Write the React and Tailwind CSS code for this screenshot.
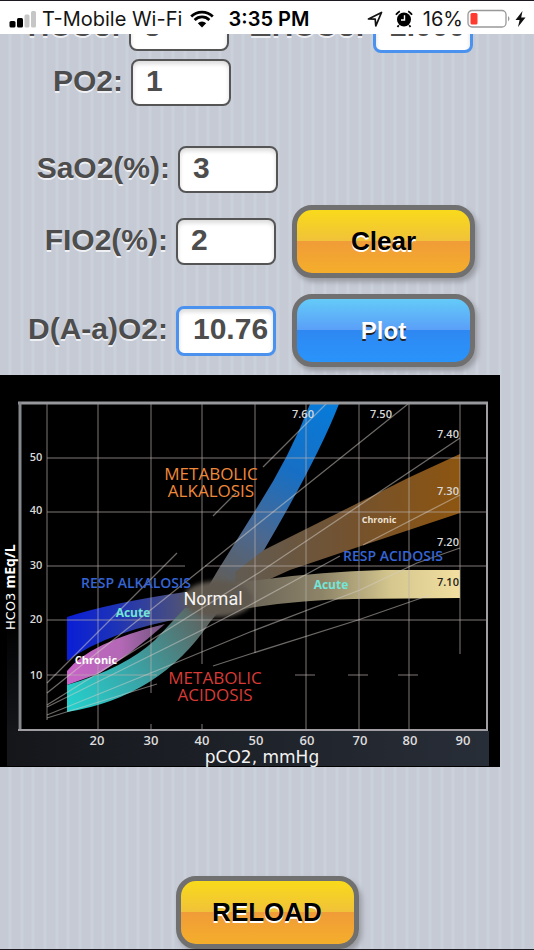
import React from "react";

const stripes =
  "bg-[#c5cad5] bg-[repeating-linear-gradient(90deg,#c5cad5_0px,#c5cad5_8px,#cbd1db_9px,#cbd1db_11px,#c5cad5_12px,#c5cad5_20px,#cbd1db_21px,#cbd1db_23px,#c5cad5_24px,#c5cad5_31px,#cbd1db_32px,#cbd1db_34px,#c5cad5_35px)]";

const pageFont = "font-['Liberation_Sans',Arial,sans-serif]";

function StatusBar() {
  return (
    <header className="z-10 grid h-[34px] shrink-0 grid-cols-[1fr_auto_1fr] items-center border-t border-[#1c1920] bg-white px-2 pt-0.5 font-['Inter',sans-serif] text-xl leading-6 text-[#151515]">
      <div className="flex items-center whitespace-nowrap">
        <svg width="28" height="18" viewBox="0 0 28 18" className="mr-1.5 shrink-0" aria-label="Signal">
          <rect x="1.5" y="11" width="6" height="6.5" rx="1.5" fill="#000" />
          <rect x="9" y="8" width="6" height="9.5" rx="1.5" fill="#000" />
          <rect x="16.5" y="4.5" width="5" height="13" rx="1.5" fill="#c6c6c6" />
          <rect x="23" y="1" width="5" height="16.5" rx="1.5" fill="#c6c6c6" />
        </svg>
        <span>T-Mobile Wi-Fi</span>
        <svg width="24" height="18" viewBox="0 0 24 18" className="ml-2 shrink-0" aria-label="Wi-Fi">
          <path d="M12 17.500 L7.800 13.300 A6 6 0 0 1 16.200 13.300 Z" fill="#000" />
          <path d="M4.600 10 A10.500 10.500 0 0 1 19.400 10" fill="none" stroke="#000" strokeWidth="2.700" />
          <path d="M1.200 6.500 A15.300 15.300 0 0 1 22.800 6.500" fill="none" stroke="#000" strokeWidth="2.700" />
        </svg>
      </div>
      <span className="ml-1 font-semibold text-black">3:35 PM</span>
      <div className="flex items-center justify-end whitespace-nowrap">
        <svg width="16" height="16" viewBox="0 0 16 16" className="mr-3 shrink-0" aria-label="Location">
          <path d="M1.500 8 L14.500 1.500 L8.800 14.800 L8.200 8.200 Z" fill="none" stroke="#111" strokeWidth="1.700" strokeLinejoin="round" />
        </svg>
        <svg width="18" height="18" viewBox="0 0 18 18" className="mr-2 shrink-0" aria-label="Alarm">
          <circle cx="9" cy="9.500" r="7" fill="#000" />
          <path d="M1 4.800 A10 10 0 0 1 4.800 1.200 M17 4.800 A10 10 0 0 0 13.200 1.200" stroke="#000" strokeWidth="1.800" fill="none" />
          <path d="M3.800 15.300 L2.500 17 M14.200 15.300 L15.500 17" stroke="#000" strokeWidth="1.800" />
          <path d="M9.500 5.200 V10 H6" fill="none" stroke="#fff" strokeWidth="1.400" />
        </svg>
        <span className="ml-0.5">16%</span>
        <svg width="44" height="20" viewBox="0 0 44 20" className="ml-1 shrink-0" aria-label="Battery">
          <rect x="1" y="1.500" width="38" height="16.500" rx="4" fill="none" stroke="#999" strokeWidth="1.300" />
          <rect x="3.500" y="4" width="7" height="11.500" rx="1.500" fill="#ff3b30" />
          <path d="M41 7 Q44 9.700 41 12.400 Z" fill="#999" />
        </svg>
        <svg width="11" height="16" viewBox="0 0 11 16" className="ml-1 shrink-0" aria-label="Charging">
          <path d="M7.500 0 L0.500 9 H4.600 L3 16 L10.500 6.500 H6.200 Z" fill="#111" />
        </svg>
      </div>
    </header>
  );
}

function Field({ id, label, value, result = false, labelClass }) {
  return (
    <div className="flex items-center gap-2">
      <label
        htmlFor={id}
        className={`shrink-0 whitespace-nowrap pb-1 text-right text-[30px] font-bold leading-[42px] text-[#4d4d4d] [text-shadow:0_2px_0_#eef0f4] ${labelClass}`}
      >
        {label}
      </label>
      <input
        id={id}
        defaultValue={value}
        className={`w-[100px] shrink-0 rounded-lg bg-white pb-1 text-[30px] font-bold leading-8 text-[#4d4d4d] shadow-[inset_0_3px_4px_#dcdcdc] outline-none ${
          result ? "h-[50px] border-[3px] border-[#4a92ee] pl-3.5" : "h-[47px] border-2 border-[#555] pl-[13px]"
        }`}
      />
    </div>
  );
}

const buttonColors = {
  gold: "bg-[linear-gradient(#f9da1b_0%,#f0c239_49%,#f09c38_50%,#f5ae2b_100%)] text-black [text-shadow:0_2px_0_#fff]",
  blue: "bg-[linear-gradient(#64cbf8_0%,#5a9ff8_49%,#2f88f2_50%,#2994fb_100%)] text-white [text-shadow:0_2px_0_#222]",
};

function GlossButton({ color, size = "text-[26px]", children }) {
  return (
    <button
      type="button"
      className={`h-[73px] w-[183px] shrink-0 rounded-[20px] border-[5px] border-[#707070] font-bold shadow-[3px_4px_5px_#9a9ca3] ${size} ${buttonColors[color]}`}
    >
      {children}
    </button>
  );
}

const columns = [
  [47, 720],
  [98, 730],
  [151, 693],
  [202, 664],
  [255, 653],
  [306, 730],
  [359, 730],
  [409, 730],
  [460, 654],
];

function Chart() {
  return (
    <svg viewBox="0 375 500 392" className="block h-auto w-[500px] max-w-full" role="img" aria-label="Acid-base nomogram">
      <defs>
        <linearGradient id="alk" gradientUnits="userSpaceOnUse" x1="320" y1="404" x2="225" y2="590">
          <stop offset="0" stopColor="#087ad8" />
          <stop offset="0.35" stopColor="#176fc4" />
          <stop offset="0.7" stopColor="#4c688f" />
          <stop offset="1" stopColor="#625d55" />
        </linearGradient>
        <linearGradient id="brown" gradientUnits="userSpaceOnUse" x1="240" y1="0" x2="460" y2="0">
          <stop offset="0" stopColor="#625b51" />
          <stop offset="0.5" stopColor="#73522f" />
          <stop offset="1" stopColor="#8d5510" />
        </linearGradient>
        <linearGradient id="cream" gradientUnits="userSpaceOnUse" x1="230" y1="0" x2="460" y2="0">
          <stop offset="0" stopColor="#625c53" />
          <stop offset="0.4" stopColor="#8d8468" />
          <stop offset="0.7" stopColor="#d5c78e" />
          <stop offset="1" stopColor="#f2dfa0" />
        </linearGradient>
        <linearGradient id="navy" gradientUnits="userSpaceOnUse" x1="67" y1="0" x2="200" y2="0">
          <stop offset="0" stopColor="#0a1ed6" />
          <stop offset="0.35" stopColor="#1c32b8" />
          <stop offset="1" stopColor="#5b5a68" />
        </linearGradient>
        <linearGradient id="pink" gradientUnits="userSpaceOnUse" x1="67" y1="0" x2="175" y2="0">
          <stop offset="0" stopColor="#c864c8" />
          <stop offset="0.5" stopColor="#b368b5" />
          <stop offset="1" stopColor="#5f5070" />
        </linearGradient>
        <linearGradient id="teal" gradientUnits="userSpaceOnUse" x1="67" y1="700" x2="205" y2="610">
          <stop offset="0" stopColor="#24cfcb" />
          <stop offset="0.4" stopColor="#38a8ab" />
          <stop offset="1" stopColor="#5f605c" />
        </linearGradient>
        <linearGradient id="footer" x1="0" y1="0" x2="1" y2="0">
          <stop offset="0" stopColor="#14161a" />
          <stop offset="1" stopColor="#282e38" />
        </linearGradient>
        <linearGradient id="side" x1="0" y1="0" x2="0" y2="1">
          <stop offset="0" stopColor="#000" />
          <stop offset="1" stopColor="#14161a" />
        </linearGradient>
        <filter id="soft" x="-20%" y="-20%" width="140%" height="140%">
          <feGaussianBlur stdDeviation="2" />
        </filter>
      </defs>

      <rect x="0" y="375" width="500" height="392" fill="#000" />
      <rect x="7" y="620" width="11" height="112" fill="url(#side)" />
      <rect x="7" y="731" width="482" height="35" fill="url(#footer)" />

      <path d="M310 404 H339 Q318 458 264 550 L246 585 L205 592 L218 570 L258 506 Q290 456 310 404 Z" fill="url(#alk)" />
      <path d="M460 454 L410 477 L358 503 L264 550 L235 572 L235 595 L290 570 L370 543 L460 513 Z" fill="url(#brown)" />
      <path d="M460 570 H383 Q320 572 267 579 L225 584 V612 Q290 600 353 599 L460 598 Z" fill="url(#cream)" />
      <path d="M67 617 Q110 603 185 592 L205 600 L190 617 Q110 630 67 661 Z" fill="url(#navy)" />
      <path d="M67 671 Q90 642 165 624 Q130 655 100 673 L67 685 Z" fill="url(#pink)" />
      <path d="M67 685 Q125 668 155 640 L185 608 L225 604 L210 622 Q160 697 67 712 Z" fill="url(#teal)" />
      <ellipse cx="218" cy="599" rx="35" ry="18" fill="#5e5850" filter="url(#soft)" />

      <g stroke="#b8b0ac" strokeOpacity="0.34" strokeWidth="2">
        {columns.map(([x, end]) => (
          <path key={x} d={`M${x} 404 V${end}`} />
        ))}
        <path d="M47 458 H487 M47 512 H487 M47 566 H185 M205 566 H487 M47 620 H487 M47 675 H157 M295 675 H315 M348 675 H368 M398 675 H418" />
        <path d="M151 724 V730 M202 724 V730" />
      </g>
      <g stroke="#d6cfc9" strokeOpacity="0.5" strokeWidth="1.300" fill="none">
        <path d="M47 683 L177 553 M213 516 L236 493 M263 467 L327 403" />
        <path d="M47 693 L213 560 L408 404" />
        <path d="M47 705 L260 572 L460 438" />
        <path d="M47 707 L202 630 L250 605 L340 556 M363 545 L460 495" />
        <path d="M47 715 L163 668 L250 632 L360 590 L417 563 L460 548" />
        <path d="M47 718 L157 684 M213 666 L250 654 L358 620 L430 595" />
      </g>

      <path d="M18 403 H488" stroke="#96989b" strokeWidth="3" />
      <path d="M20 402 V731" stroke="#85888c" strokeWidth="3" />
      <path d="M487 402 V731 M18 730 H488" stroke="#a09da3" strokeWidth="2" />

      <g fontFamily="'Open Sans','Noto Sans',sans-serif" textAnchor="middle">
        <g fontSize="17" fontWeight="500">
          <text x="211" y="480" fill="#f0883a">METABOLIC</text>
          <text x="211" y="497" fill="#f0883a">ALKALOSIS</text>
          <text x="215" y="684" fill="#d83a35">METABOLIC</text>
          <text x="215" y="701" fill="#d83a35">ACIDOSIS</text>
        </g>
        <g fontSize="14" fontWeight="600" fill="#3564d4">
          <text x="136" y="588">RESP ALKALOSIS</text>
          <text x="393" y="561">RESP ACIDOSIS</text>
        </g>
        <g fontSize="12" fontWeight="700" fill="#72e6d8">
          <text x="133" y="617">Acute</text>
          <text x="331" y="589">Acute</text>
        </g>
        <text x="96" y="664" fontSize="11" fontWeight="700" fill="#fff">Chronic</text>
        <text x="379" y="523" fontSize="9" fontWeight="700" fill="#eee3d5">Chronic</text>
        <g fontSize="11" fontWeight="600" fill="#d9d9d9">
          <text x="36" y="461">50</text>
          <text x="36" y="514">40</text>
          <text x="36" y="569">30</text>
          <text x="36" y="623">20</text>
          <text x="36" y="679">10</text>
          <text x="303" y="418">7.60</text>
          <text x="381" y="418">7.50</text>
          <text x="448" y="438">7.40</text>
          <text x="448" y="495">7.30</text>
          <text x="448" y="546">7.20</text>
          <text x="448" y="586" fill="#26221a">7.10</text>
        </g>
        <g fontSize="13" fontWeight="600" fill="#dcdcdc">
          <text x="97" y="745">20</text>
          <text x="151" y="745">30</text>
          <text x="202" y="745">40</text>
          <text x="256" y="745">50</text>
          <text x="307" y="745">60</text>
          <text x="360" y="745">70</text>
          <text x="410" y="745">80</text>
          <text x="463" y="745">90</text>
        </g>
      </g>
      <text x="213" y="605" fontSize="18" fontFamily="Roboto,sans-serif" textAnchor="middle" fill="#f4f4f4">Normal</text>
      <text x="262" y="763" fontSize="17" fontFamily="'DejaVu Sans',sans-serif" textAnchor="middle" fill="#f2f2f2">pCO2, mmHg</text>
      <text transform="translate(15 630) rotate(-90)" fontSize="13" fontFamily="'DejaVu Sans',sans-serif" fill="#fff">
        HCO3 <tspan fontSize="14" fontFamily="'Open Sans',sans-serif" fontWeight="700">mEq/L</tspan>
      </text>
    </svg>
  );
}

export default function App() {
  return (
    <div className={`flex h-screen flex-col overflow-hidden border-b border-[#1c1920] ${pageFont} ${stripes}`}>
      <StatusBar />
      <main className="min-h-0 flex-1 overflow-hidden">
        <form className="-mt-[30px]" onSubmit={(e) => e.preventDefault()}>
          <div className="flex h-[47px] items-center gap-5">
            <Field id="hco3" label="HCO3:" value="3" labelClass="w-[121px]" />
            <Field id="dhco3" label="ΔHCO3:" value="2.000" result labelClass="w-[116px]" />
          </div>
          <div className="mt-2">
            <Field id="po2" label="PO2:" value="1" labelClass="w-[123px]" />
          </div>
          <div className="mt-10">
            <Field id="sao2" label="SaO2(%):" value="3" labelClass="w-[170px]" />
          </div>
          <div className="mt-3 flex items-center gap-4">
            <Field id="fio2" label="FIO2(%):" value="2" labelClass="w-[168px]" />
            <GlossButton color="gold">Clear</GlossButton>
          </div>
          <div className="mt-4 flex items-center gap-4">
            <Field id="aado2" label="D(A-a)O2:" value="10.76" result labelClass="w-[168px]" />
            <GlossButton color="blue" size="text-2xl">Plot</GlossButton>
          </div>
          <div className="mt-2">
            <Chart />
          </div>
          <div className="mt-[109px] flex justify-center">
            <GlossButton color="gold">RELOAD</GlossButton>
          </div>
        </form>
      </main>
    </div>
  );
}
